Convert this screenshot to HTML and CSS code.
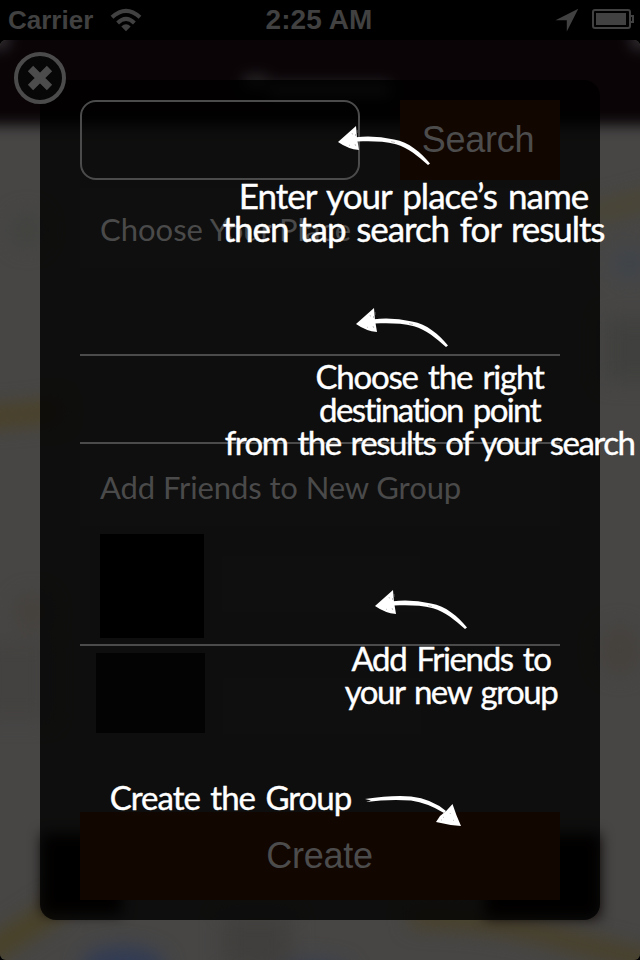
FILE: index.html
```html
<!DOCTYPE html>
<html lang="en">
<head>
<meta charset="utf-8">
<title>New Group</title>
<link rel="stylesheet" href="styles.css">
</head>
<body>
<div class="phone">
  <header class="status">
    <div class="carrier">
      <span class="carrier-name">Carrier</span>
      <svg class="wifi" width="32" height="24" viewBox="0 0 32 24"><g fill="none" stroke="#414141" stroke-width="4"><path d="M2 9.3Q16-3.6 30 9.3"/><path d="M7.6 15Q16 6.8 24.4 15"/></g><path d="M11.3 18.5Q16 14.2 20.7 18.5L16 23.3Z" fill="#414141"/></svg>
    </div>
    <span class="time">2:25 AM</span>
    <div class="indicators">
      <svg width="24" height="24" viewBox="0 0 24 24"><path d="M23.3.8 11.8 23.5V12.2H.5Z" fill="#414141"/></svg>
      <svg width="43" height="22" viewBox="0 0 43 22"><rect x="1" y="1" width="37" height="18" rx="2" fill="none" stroke="#414141" stroke-width="2"/><path d="M4 4h30v12H4z" fill="#414141"/><path d="M38 7h3v6h-3" fill="none" stroke="#414141" stroke-width="2"/></svg>
    </div>
  </header>
  <main class="app">
    <svg class="map" width="640" height="920" viewBox="0 40 640 920">
      <defs>
        <filter id="soft" filterUnits="userSpaceOnUse" x="-60" y="-20" width="760" height="1040" color-interpolation-filters="sRGB"><feGaussianBlur stdDeviation="10"/></filter>
        <filter id="edge" filterUnits="userSpaceOnUse" x="-60" y="-20" width="760" height="1040" color-interpolation-filters="sRGB"><feGaussianBlur stdDeviation="7"/></filter>
      </defs>
      <rect y="40" width="640" height="920" fill="#474645"/>
      <g filter="url(#soft)">
        <path d="M-30 418Q20 416 60 410" stroke="#4b4124" stroke-width="20" fill="none"/>
        <path d="M590 214L660 196" stroke="#4b452f" stroke-width="16" fill="none"/>
        <path d="M-20 958L62 905" stroke="#4a4224" stroke-width="22" fill="none"/>
        <path d="M410 918Q490 918 560 938T670 965" stroke="#494026" stroke-width="18" fill="none"/>
        <ellipse cx="123" cy="966" rx="42" ry="19" fill="#303b55"/>
        <ellipse cx="310" cy="972" rx="40" ry="12" fill="#383f50"/>
        <ellipse cx="630" cy="264" rx="18" ry="14" fill="#3e444b"/>
        <path d="M605 318h60v64h-60z" fill="#40403e"/>
        <path d="M222 915h70v55h-70z" fill="#413f3d"/>
        <ellipse cx="620" cy="650" rx="20" ry="25" fill="#45413c"/>
        <ellipse cx="32" cy="612" rx="18" ry="18" fill="#45413c"/>
        <ellipse cx="27" cy="230" rx="16" ry="18" fill="#42433f"/>
        <path d="M-20 640h70v80h-70z" fill="#444240"/>
      </g>
      <g filter="url(#edge)">
        <path d="M-30 0H670V125H-30z" fill="#0a0407"/>
        <path d="M42 834h80v80H42zM485 834h115v84H485z" fill="#080200"/>
        <path d="M244 76h24v12h-24zM270 83h120v14H270z" fill="#2c2b2c"/>
        <circle cx="0" cy="40" r="10" fill="#343234"/><circle cx="640" cy="40" r="10" fill="#343234"/>
      </g>
    </svg>
    <section class="panel">
      <div class="search-row"><div class="field"></div><div class="button">Search</div></div>
      <h2 class="section first"><span class="choose">Choose Your Place</span></h2>
      <div class="place"></div>
      <div class="place"></div>
      <h2 class="section"><span class="add">Add Friends to New Group</span></h2>
      <div class="friend"><div class="avatar"></div><div class="name"></div></div>
      <div class="friend second"><div class="avatar"></div><div class="name"></div></div>
      <div class="button create"><span>Create</span></div>
    </section>
  </main>
  <svg class="close" width="60" height="60" viewBox="0 0 60 60"><circle cx="30" cy="30" r="24" fill="#070707" stroke="#4b4b4b" stroke-width="4"/><path d="M20.5 20.5l19 19M39.500 20.500l-19 19" stroke="#4c4c4c" stroke-width="7.500"/></svg>

  <svg class="arrows" width="640" height="960" viewBox="0 0 640 960">
    <defs>
      <g id="arrow">
        <path d="M0 16L18 0Q18.500 12 21 24Q10 23 0 16Z" fill="#fff"/>
        <path d="M18 11.200Q37 9.300 56 13.400C71 16 83 26.500 92 37.500L90 39C80 30 70 22 58 18.300C45 14.800 32 15 19 15.400Z" fill="#fff"/>
        <path d="M14 7l.6 1.500M17.500 8v2M11 19l1 .6M17 18l.8 2M19 4v3M53 15.500l4 1" stroke="#999" stroke-width=".6"/>
      </g>
    </defs>
    <use href="#arrow" x="338" y="126"/>
    <use href="#arrow" x="356" y="308"/>
    <use href="#arrow" x="375" y="590"/>
    <path d="M365 799Q392 795 411 796.500Q432 799 446 811L444 813Q428 803 411 800.500Q388 799 366 802L371 800.500Z" fill="#fff"/>
    <path d="M452.500 804Q456 815 461 826Q448 825 436 822L440 816Q447 811 452.500 804Z" fill="#fff"/>
    <path d="M443 817l1 .6M450 813l.6 1M441 820h1M453 820l1 .6" stroke="#999" stroke-width=".6"/>
  </svg>
  <p class="note note-search"><span class="l1">Enter your place’s name</span><span class="l2">then tap search for results</span></p>
  <p class="note note-place"><span class="l3">Choose the right</span><span class="l4">destination point</span><span class="l5">from the results of your search</span></p>
  <p class="note note-friends"><span class="l6">Add Friends to</span><span class="l7">your new group</span></p>
  <p class="note note-create"><span class="l8">Create the Group</span></p>
</div>
</body>
</html>
```
FILE: styles.css
```css
* { box-sizing: border-box; }
body { margin: 0; background: #000; }
.phone { position: relative; width: 640px; height: 960px; overflow: hidden; font-family: Lato, "Liberation Sans", sans-serif; }
.status { display: grid; grid-template-columns: 1fr auto 1fr; align-items: center; height: 40px; padding: 0 5px 0 8px; color: #414141; font: bold 26px/40px "Liberation Sans", sans-serif; }
.carrier, .indicators { display: flex; align-items: center; }
.carrier { gap: 17px; }
.time { margin-right: 5px; font-size: 28px; letter-spacing: .1px; }
.indicators { justify-content: flex-end; gap: 13px; }
.app { position: relative; height: 920px; padding: 40px; border-radius: 6px; overflow: hidden; }
.map { position: absolute; left: 0; top: 0; }
.panel { position: relative; height: 840px; padding: 20px 40px; border-radius: 16px; background: rgba(0, 0, 0, .8); }
.search-row { display: flex; gap: 40px; }
.field { width: 280px; height: 80px; border: 2px solid #4b4b4b; border-radius: 16px; }
.button { display: flex; align-items: center; justify-content: center; width: 160px; height: 80px; padding-right: 4px; background: #120601; color: #4c4c4c; font: 36px/40px "Liberation Sans", sans-serif; letter-spacing: -.3px; }
.section { display: flex; align-items: center; height: 82px; margin: 0; padding: 3px 20px 0; background: rgba(255, 255, 255, .008); color: #4a4a4a; font-size: 31px; font-weight: 400; white-space: nowrap; }
.section.first { margin-top: 8px; height: 80px; padding-top: 1px; }
.add { letter-spacing: -.1px; }
.place { height: 88px; border-bottom: 2px solid #4b4b4b; }
.friend { display: flex; gap: 18px; height: 120px; padding: 8px 0 0 20px; border-bottom: 2px solid #4b4b4b; }
.avatar { width: 104px; height: 104px; background: #000; }
.name { width: 198px; height: 56px; margin-top: 22px; background: rgba(255, 255, 255, .008); }
.second { height: 166px; padding: 7px 0 0 16px; border: 0; }
.second .avatar { width: 109px; height: 80px; background: #030303; }
.second .name { margin-top: 25px; }
.create { width: 480px; height: 88px; padding-right: 1px; }
.close { position: absolute; left: 10px; top: 48px; }
.arrows { position: absolute; left: 0; top: 0; }
.note { position: absolute; display: flex; flex-direction: column; align-items: center; margin: 0; color: #fff; font-size: 33px; line-height: 33px; word-spacing: 3px; white-space: nowrap; -webkit-text-stroke: .4px #fff; }
.note-search { left: 223px; top: 179px; width: 381px; font-size: 35px; }
.note-place { left: 225px; top: 360px; width: 409px; }
.note-friends { left: 345px; top: 642px; width: 212px; }
.note-create { left: 110px; top: 781px; width: 241px; }
.l1 { letter-spacing: -.95px; }
.l2 { letter-spacing: -1.1px; }
.l3 { letter-spacing: -1.2px; }
.l4 { letter-spacing: -1.6px; }
.l5 { letter-spacing: -1.5px; }
.l6 { letter-spacing: -1.35px; }
.l7 { letter-spacing: -1.45px; }
.l8 { letter-spacing: -1px; }
```
